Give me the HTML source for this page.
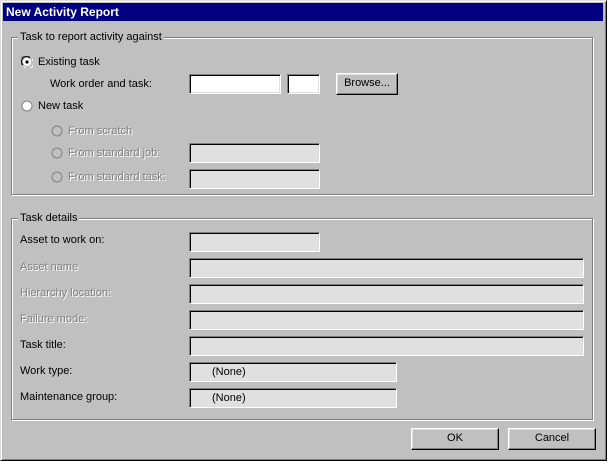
<!DOCTYPE html>
<html><head><style>
*{box-sizing:border-box}
body{margin:0;width:607px;height:461px;overflow:hidden;background:#c0c0c0;font-family:"Liberation Sans",Arial,sans-serif;font-size:11px;color:#000}
.win{position:absolute;left:0;top:0;width:607px;height:461px;border-top:1px solid #dfdfdf;border-left:1px solid #dfdfdf;border-right:1px solid #000;border-bottom:1px solid #000;box-shadow:inset 1px 1px 0 #fff,inset -1px -1px 0 #808080}
.title{position:absolute;left:3px;top:3px;width:600px;height:18px;background:#000080;color:#fff;font-weight:bold;font-size:12px;line-height:18px;padding-left:3px}
.grp{position:absolute;border:1px solid #808080;box-shadow:1px 1px 0 #fff,inset 1px 1px 0 #fff}
.gl{position:absolute;background:#c0c0c0;padding:0 2px;font-size:11px}
.t{position:absolute;white-space:nowrap;line-height:13px}
.d{color:#808080;text-shadow:1px 1px 0 #fff}
.f{position:absolute;height:20px;border-top:1px solid #808080;border-left:1px solid #808080;border-right:1px solid #fff;border-bottom:1px solid #fff;box-shadow:inset 1px 1px 0 #000,inset -1px -1px 0 #dfdfdf;background:#e0e0e0;padding-left:22px;line-height:18px}
.w{background:#fff}
.b{position:absolute;height:22px;background:#c0c0c0;border-top:1px solid #fff;border-left:1px solid #fff;border-right:1px solid #000;border-bottom:1px solid #000;box-shadow:inset -1px -1px 0 #808080,inset 1px 1px 0 #dfdfdf;text-align:center;line-height:19px}
svg{position:absolute}
</style></head><body>
<div class="win"></div>
<div class="title">New Activity Report</div>

<div class="grp" style="left:11px;top:37px;width:582px;height:158px"></div>
<div class="gl t" style="left:18px;top:31px">Task to report activity against</div>

<svg style="left:21px;top:56px" width="12" height="12" viewBox="0 0 12 12"><path d="M1 9A5 5 0 0 1 9 1" stroke="#808080" fill="none"/><path d="M2 9A4 4 0 0 1 9 2" stroke="#000" fill="none"/><circle cx="6" cy="6" r="4" fill="#fff"/><path d="M3 11A5 5 0 0 0 11 3" stroke="#fff" fill="none"/><circle cx="6" cy="6" r="1.6" fill="#000"/></svg>
<div class="t" style="left:38px;top:56px">Existing task</div>
<div class="t" style="left:50px;top:78px">Work order and task:</div>
<div class="f w" style="left:189px;top:74px;width:92px"></div>
<div class="f w" style="left:287px;top:74px;width:33px"></div>
<div class="b" style="left:336px;top:73px;width:62px">Browse...</div>

<svg style="left:21px;top:100px" width="12" height="12" viewBox="0 0 12 12"><circle cx="6" cy="6" r="5" fill="#fff" stroke="#808080"/><circle cx="6" cy="6" r="4" fill="#fff"/></svg>
<div class="t" style="left:38px;top:100px">New task</div>

<svg style="left:51px;top:125px" width="12" height="12"><circle cx="6" cy="6" r="5" fill="#c0c0c0" stroke="#808080"/></svg>
<div class="t d" style="left:68px;top:125px">From scratch</div>
<svg style="left:51px;top:147px" width="12" height="12"><circle cx="6" cy="6" r="5" fill="#c0c0c0" stroke="#808080"/></svg>
<div class="t d" style="left:68px;top:147px">From standard job:</div>
<div class="f" style="left:189px;top:143px;width:131px"></div>
<svg style="left:51px;top:171px" width="12" height="12"><circle cx="6" cy="6" r="5" fill="#c0c0c0" stroke="#808080"/></svg>
<div class="t d" style="left:68px;top:171px">From standard task:</div>
<div class="f" style="left:189px;top:169px;width:131px"></div>

<div class="grp" style="left:11px;top:218px;width:582px;height:202px"></div>
<div class="gl t" style="left:18px;top:212px">Task details</div>

<div class="t" style="left:20px;top:234px">Asset to work on:</div>
<div class="f" style="left:189px;top:232px;width:131px"></div>
<div class="t d" style="left:20px;top:261px">Asset name</div>
<div class="f" style="left:189px;top:258px;width:395px"></div>
<div class="t d" style="left:20px;top:287px">Hierarchy location:</div>
<div class="f" style="left:189px;top:284px;width:395px"></div>
<div class="t d" style="left:20px;top:313px">Failure mode:</div>
<div class="f" style="left:189px;top:310px;width:395px"></div>
<div class="t" style="left:20px;top:339px">Task title:</div>
<div class="f" style="left:189px;top:336px;width:395px"></div>
<div class="t" style="left:20px;top:365px">Work type:</div>
<div class="f" style="left:189px;top:362px;width:208px">(None)</div>
<div class="t" style="left:20px;top:391px">Maintenance group:</div>
<div class="f" style="left:189px;top:388px;width:208px">(None)</div>

<div class="b" style="left:411px;top:428px;width:88px">OK</div>
<div class="b" style="left:508px;top:428px;width:88px">Cancel</div>
</body></html>
